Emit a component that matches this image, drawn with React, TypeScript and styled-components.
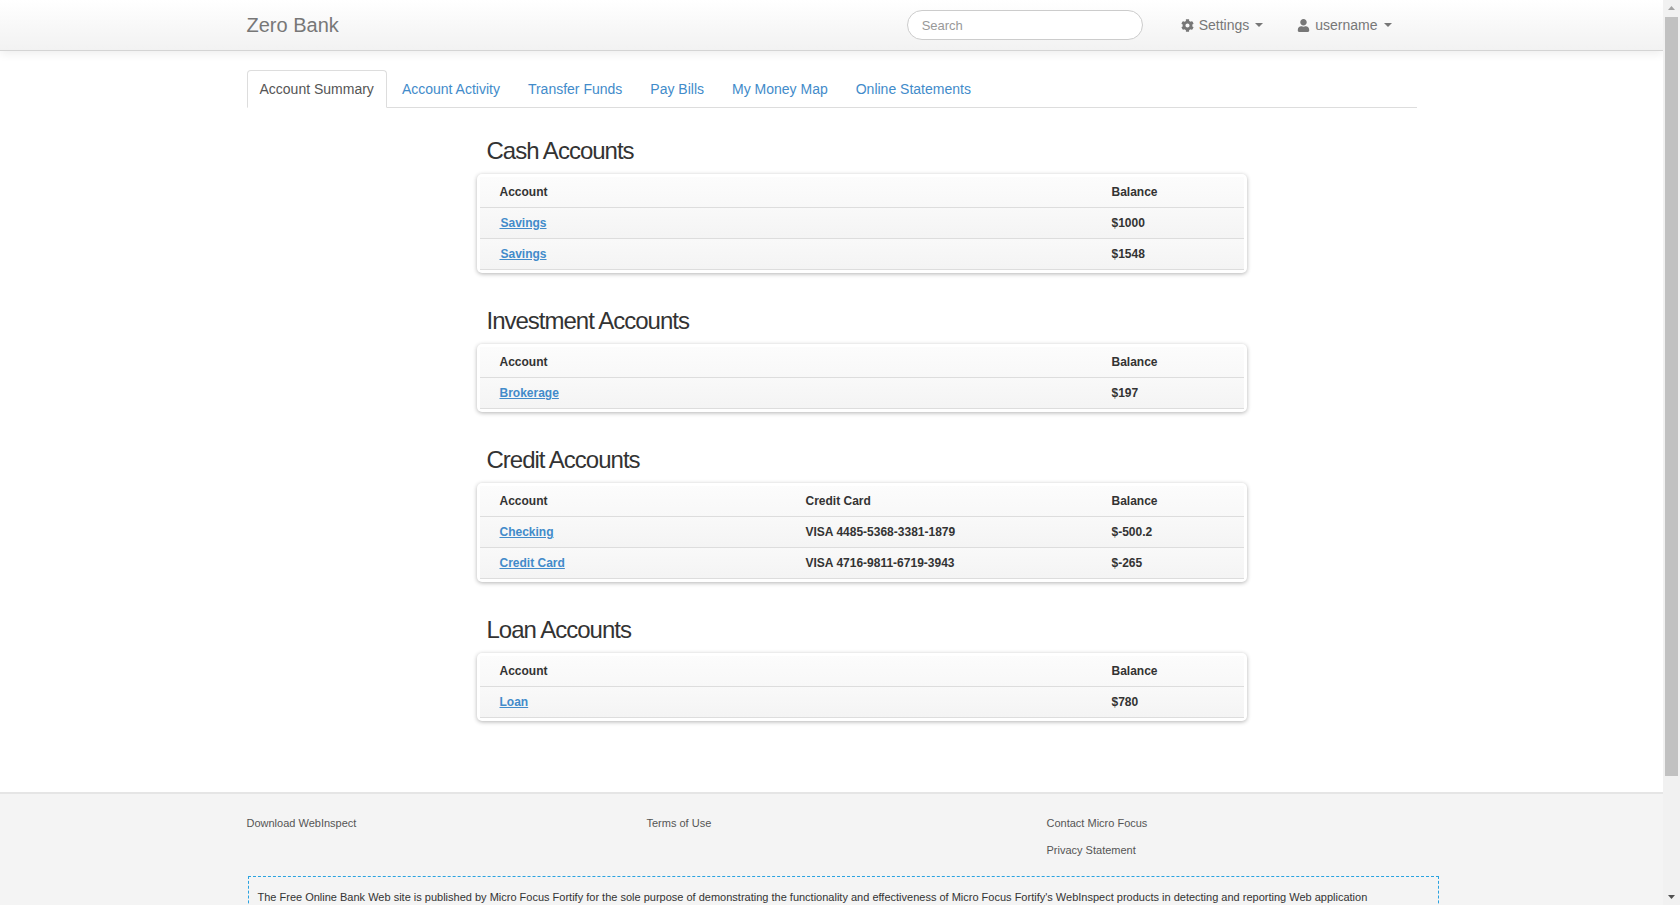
import React from "react";
import styled, { createGlobalStyle } from "styled-components";
import { FaCog, FaUser } from "react-icons/fa";

const GlobalStyle = createGlobalStyle`
  html, body {
    margin: 0;
    height: 100%;
    overflow: hidden;
    background: #fff;
    font-family: "Liberation Sans", Arial, sans-serif;
    font-size: 14px;
    color: #333;
  }
`;

const Viewport = styled.div`
  display: flex;
  height: 905px;
  overflow: hidden;
`;

const Page = styled.div`
  flex: 1;
  min-width: 0;
  overflow: hidden;
`;

const Navbar = styled.header`
  height: 50px;
  background: linear-gradient(to bottom, #ffffff 0%, #f2f2f2 100%);
  border-bottom: 1px solid #d4d4d4;
  box-shadow: 0 3px 9px rgba(0, 0, 0, 0.07);
`;

const NavInner = styled.div`
  box-sizing: border-box;
  width: 1170px;
  margin: 0 auto;
  padding-right: 25px;
  height: 100%;
  display: flex;
  align-items: center;
`;

const Brand = styled.a`
  font-size: 20px;
  color: #777;
  margin-right: auto;
`;

const Search = styled.input`
  box-sizing: border-box;
  width: 236px;
  height: 30px;
  padding: 0 14px;
  border: 1px solid #ccc;
  border-radius: 15px;
  background: #fff;
  font: 13px "Liberation Sans", Arial, sans-serif;
  outline: none;
  &::placeholder {
    color: #999;
    opacity: 1;
  }
`;

const NavMenu = styled.a<{ $left: number }>`
  display: flex;
  align-items: center;
  gap: 6px;
  margin-left: ${(p) => p.$left}px;
  color: #777;
  font-size: 14px;
  svg {
    margin-right: -1px;
  }
`;

const Caret = styled.span`
  width: 0;
  height: 0;
  border-top: 4px solid #777;
  border-left: 4px solid transparent;
  border-right: 4px solid transparent;
`;

const Main = styled.main`
  width: 1170px;
  margin: 0 auto;
  padding-top: 19px;
`;

const Tabs = styled.ul`
  display: flex;
  width: 1170px;
  margin: 0;
  padding: 0;
  list-style: none;
  border-bottom: 1px solid #ddd;
`;

const Tab = styled.li<{ $active?: boolean }>`
  box-sizing: border-box;
  height: 38px;
  margin-bottom: -1px;
  margin-right: ${(p) => (p.$active ? "1px" : "0")};
  padding: 9px ${(p) => (p.$active ? "12px" : "13px")};
  line-height: 18px;
  color: ${(p) => (p.$active ? "#555" : "#428bca")};
  border: 1px solid ${(p) => (p.$active ? "#ddd" : "transparent")};
  border-bottom-color: ${(p) => (p.$active ? "#fff" : "transparent")};
  border-radius: 4px 4px 0 0;
`;

const Sections = styled.div`
  width: 770px;
  margin: 0 0 0 230px;
  padding-top: 27px;
`;

const Section = styled.section`
  margin-bottom: 32px;
`;

const Heading = styled.h2`
  margin: 0 0 7px 10px;
  font-size: 24px;
  font-weight: 400;
  line-height: 32px;
  letter-spacing: -1px;
  color: #333;
`;

const Card = styled.div`
  padding: 3px;
  background: #fff;
  border-radius: 5px;
  box-shadow: 0 1px 4px rgba(0, 0, 0, 0.3);
`;

const Row = styled.div<{ $cols: string; $head?: boolean }>`
  display: grid;
  grid-template-columns: ${(p) => p.$cols};
  align-items: center;
  box-sizing: border-box;
  height: 31px;
  padding-left: 20px;
  border-bottom: 1px solid #ddd;
  font-size: 12px;
  font-weight: 700;
  color: #333;
  background: ${(p) =>
    p.$head
      ? "linear-gradient(to bottom, #fcfcfc, #f8f8f8)"
      : "linear-gradient(to bottom, #f9f9f9, #f4f4f4)"};
`;

const AccountLink = styled.a`
  color: #428bca;
  text-decoration: underline;
  justify-self: start;
`;

const Footer = styled.footer`
  margin-top: 71px;
  height: 200px;
  background: #f4f4f4;
  border-top: 2px solid #e5e5e5;
`;

const FooterInner = styled.div`
  width: 1200px;
  margin: 0 auto;
  transform: translateX(15px);
`;

const FooterLinks = styled.div`
  display: grid;
  grid-template-columns: repeat(3, 400px);
  padding-top: 22px;
`;

const FooterCol = styled.div`
  display: flex;
  flex-direction: column;
  gap: 13px;
`;

const FooterLink = styled.a`
  font-size: 11px;
  line-height: 14px;
  color: #555;
`;

const Disclaimer = styled.div`
  box-sizing: border-box;
  width: 1191px;
  margin: 19px 0 0 1px;
  padding: 13px 9px;
  border: 1px dashed #2aa3e0;
  font-size: 11px;
  line-height: 14px;
  color: #333;
`;

const Scrollbar = styled.div`
  width: 17px;
  flex: none;
  display: flex;
  flex-direction: column;
  align-items: center;
  background: #f1f1f1;
`;

const ScrollArrow = styled.svg`
  display: block;
  width: 17px;
  height: 17px;
  flex: none;
`;

const ScrollTrack = styled.div`
  flex: 1;
  align-self: stretch;
  padding: 0 2px;
`;

const ScrollThumb = styled.div`
  height: 759px;
  background: #c1c1c1;
`;

type Account = { name: string; card?: string; balance: string; pad?: boolean };
type Group = { title: string; accounts: Account[]; withCard?: boolean };

const groups: Group[] = [
  {
    title: "Cash Accounts",
    accounts: [
      { name: "Savings", balance: "$1000", pad: true },
      { name: "Savings", balance: "$1548", pad: true },
    ],
  },
  { title: "Investment Accounts", accounts: [{ name: "Brokerage", balance: "$197" }] },
  {
    title: "Credit Accounts",
    withCard: true,
    accounts: [
      { name: "Checking", card: "VISA 4485-5368-3381-1879", balance: "$-500.2" },
      { name: "Credit Card", card: "VISA 4716-9811-6719-3943", balance: "$-265" },
    ],
  },
  { title: "Loan Accounts", accounts: [{ name: "Loan", balance: "$780" }] },
];

const tabs = [
  "Account Summary",
  "Account Activity",
  "Transfer Funds",
  "Pay Bills",
  "My Money Map",
  "Online Statements",
];

function App() {
  return (
    <Viewport>
      <GlobalStyle />
      <Page>
        <Navbar>
          <NavInner>
            <Brand>Zero Bank</Brand>
            <Search placeholder="Search" />
            <NavMenu $left={38}>
              <FaCog size={13} />
              Settings
              <Caret />
            </NavMenu>
            <NavMenu $left={34}>
              <FaUser size={13} />
              username
              <Caret />
            </NavMenu>
          </NavInner>
        </Navbar>
        <Main>
          <Tabs>
            {tabs.map((t, i) => (
              <Tab key={t} $active={i === 0}>
                {t}
              </Tab>
            ))}
          </Tabs>
          <Sections>
            {groups.map((g) => {
              const cols = g.withCard ? "306px 306px 1fr" : "612px 1fr";
              return (
                <Section key={g.title}>
                  <Heading>{g.title}</Heading>
                  <Card>
                    <Row $cols={cols} $head>
                      <span>Account</span>
                      {g.withCard && <span>Credit Card</span>}
                      <span>Balance</span>
                    </Row>
                    {g.accounts.map((a, i) => (
                      <Row $cols={cols} key={i}>
                        <AccountLink>{a.pad ? "\u200A" + a.name : a.name}</AccountLink>
                        {g.withCard && <span>{a.card}</span>}
                        <span>{a.balance}</span>
                      </Row>
                    ))}
                  </Card>
                </Section>
              );
            })}
          </Sections>
        </Main>
        <Footer>
          <FooterInner>
            <FooterLinks>
              <FooterCol>
                <FooterLink>Download WebInspect</FooterLink>
              </FooterCol>
              <FooterCol>
                <FooterLink>Terms of Use</FooterLink>
              </FooterCol>
              <FooterCol>
                <FooterLink>Contact Micro Focus</FooterLink>
                <FooterLink>Privacy Statement</FooterLink>
              </FooterCol>
            </FooterLinks>
            <Disclaimer>
              The Free Online Bank Web site is published by Micro Focus Fortify for the sole purpose of
              demonstrating the functionality and effectiveness of Micro Focus Fortify's WebInspect
              products in detecting and reporting Web application
            </Disclaimer>
          </FooterInner>
        </Footer>
      </Page>
      <Scrollbar>
        <ScrollArrow viewBox="0 0 17 17">
          <path d="M8.5 6 L12 10 L5 10 Z" fill="#a3a3a3" />
        </ScrollArrow>
        <ScrollTrack>
          <ScrollThumb />
        </ScrollTrack>
        <ScrollArrow viewBox="0 0 17 17">
          <path d="M5 7 L12 7 L8.5 11 Z" fill="#505050" />
        </ScrollArrow>
      </Scrollbar>
    </Viewport>
  );
}

export default App;
